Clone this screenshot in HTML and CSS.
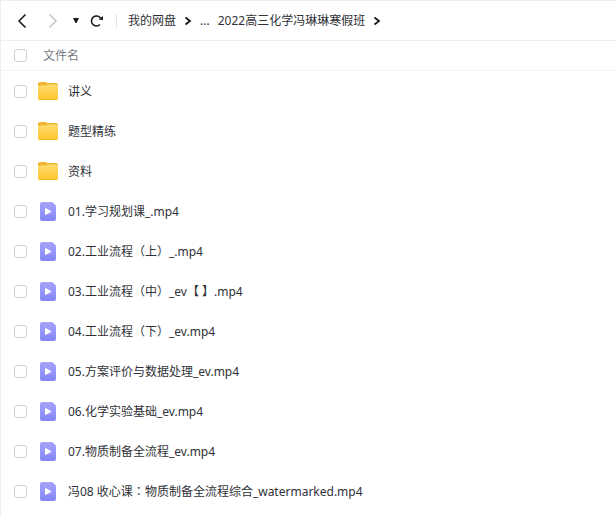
FILE: index.html
```html
<!DOCTYPE html>
<html lang="zh-CN">
<head>
<meta charset="utf-8">
<meta name="viewport" content="width=device-width, initial-scale=1">
<title>我的网盘</title>
<link rel="stylesheet" href="styles.css">
</head>
<body>
<svg class="defs" aria-hidden="true">
  <defs>
    <linearGradient id="folder-fill" x1="0" y1="0" x2="0" y2="1">
      <stop offset="0" stop-color="#ffdc70"/><stop offset="1" stop-color="#ffc72e"/>
    </linearGradient>
    <linearGradient id="video-fill" x1="0" y1="0" x2="0" y2="1">
      <stop offset="0" stop-color="#a6a5fa"/><stop offset="1" stop-color="#8585f8"/>
    </linearGradient>
    <symbol id="folder" viewBox="0 0 20 18">
      <path d="M0 2Q0 0 2 0H7Q8 0 9 1H18Q20 1 20 3V10H0Z" fill="#efb42e"/>
      <path d="M0 4.5Q0 3.5 1 3.5H8.5L10 2.5H18.5Q20 2.500 20 4V16Q20 18 18 18H2Q0 18 0 16Z" fill="url(#folder-fill)"/>
      <path d="M1 17.5H19" stroke="#f3b91f" stroke-width="1" stroke-linecap="round"/>
    </symbol>
    <symbol id="video" viewBox="0 0 16 19">
      <path d="M2 0H12L16 4V17Q16 19 14 19H2Q0 19 0 17V2Q0 0 2 0Z" fill="url(#video-fill)"/>
      <path d="M12 0L16 4H13Q12 4 12 3Z" fill="#9897f5"/>
      <path d="M5.500 6.500V12.500L11 9.500Z" fill="#fff" stroke="#fff" stroke-width="1" stroke-linejoin="round"/>
    </symbol>
  </defs>
</svg>
<main class="drive">
  <header class="toolbar">
    <button class="tool back" type="button" aria-label="后退"><svg width="10" height="14" viewBox="0 0 10 14"><path d="M8.500 0.500L2 7L8.500 13.500"/></svg></button>
    <button class="tool forward" type="button" aria-label="前进"><svg width="10" height="14" viewBox="0 0 10 14"><path d="M1.500 0.500L8 7L1.500 13.500"/></svg></button>
    <button class="tool history" type="button" aria-label="历史"><svg width="6" height="5" viewBox="0 0 6 5"><path d="M0 0H6L3.500 5H2.500Z"/></svg></button>
    <button class="tool refresh" type="button" aria-label="刷新"><svg width="14" height="12" viewBox="0 0 14 12"><path d="M10 9.500A5 5 0 1 1 10.500 3"/><path class="tip" d="M8.500 4.500L13 1V5Z"/></svg></button>
    <nav class="crumbs" aria-label="路径">
      <a href="#">我的网盘</a>
      <svg class="sep" width="8" height="10" viewBox="0 0 8 10"><path d="M1.500 1.500L6 5L1.500 8.500"/></svg>
      <a class="more" href="#">...</a>
      <a href="#">2022高三化学冯琳琳寒假班</a>
      <svg class="sep" width="8" height="10" viewBox="0 0 8 10"><path d="M1.500 1.500L6 5L1.500 8.500"/></svg>
    </nav>
  </header>
  <table class="files">
    <colgroup><col class="col-pick"><col class="col-kind"><col></colgroup>
    <thead>
      <tr><th class="pick"><input type="checkbox" aria-label="全选"></th><th class="title" colspan="2">文件名</th></tr>
    </thead>
    <tbody>
      <tr><td class="pick"><input type="checkbox" id="f1"></td><td><svg class="folder"><use href="#folder"/></svg></td><td class="name"><label for="f1">讲义</label></td></tr>
      <tr><td class="pick"><input type="checkbox" id="f2"></td><td><svg class="folder"><use href="#folder"/></svg></td><td class="name"><label for="f2">题型精练</label></td></tr>
      <tr><td class="pick"><input type="checkbox" id="f3"></td><td><svg class="folder"><use href="#folder"/></svg></td><td class="name"><label for="f3">资料</label></td></tr>
      <tr><td class="pick"><input type="checkbox" id="f4"></td><td><svg class="video"><use href="#video"/></svg></td><td class="name"><label for="f4">01.学习规划课_.mp4</label></td></tr>
      <tr><td class="pick"><input type="checkbox" id="f5"></td><td><svg class="video"><use href="#video"/></svg></td><td class="name"><label for="f5">02.工业流程<span class="centred" lang="zh-TW">（上）</span>_.mp4</label></td></tr>
      <tr><td class="pick"><input type="checkbox" id="f6"></td><td><svg class="video"><use href="#video"/></svg></td><td class="name"><label for="f6">03.工业流程<span class="centred" lang="zh-TW">（中）</span>_ev【 】.mp4</label></td></tr>
      <tr><td class="pick"><input type="checkbox" id="f7"></td><td><svg class="video"><use href="#video"/></svg></td><td class="name"><label for="f7">04.工业流程<span class="centred" lang="zh-TW">（下）</span>_ev.mp4</label></td></tr>
      <tr><td class="pick"><input type="checkbox" id="f8"></td><td><svg class="video"><use href="#video"/></svg></td><td class="name"><label for="f8">05.方案评价与数据处理_ev.mp4</label></td></tr>
      <tr><td class="pick"><input type="checkbox" id="f9"></td><td><svg class="video"><use href="#video"/></svg></td><td class="name"><label for="f9">06.化学实验基础_ev.mp4</label></td></tr>
      <tr><td class="pick"><input type="checkbox" id="f10"></td><td><svg class="video"><use href="#video"/></svg></td><td class="name"><label for="f10">07.物质制备全流程_ev.mp4</label></td></tr>
      <tr><td class="pick"><input type="checkbox" id="f11"></td><td><svg class="video"><use href="#video"/></svg></td><td class="name"><label for="f11">冯08 收心课<span class="centred" lang="zh-TW">：</span>物质制备全流程综合_watermarked.mp4</label></td></tr>
    </tbody>
  </table>
</main>
</body>
</html>
```
FILE: styles.css
```css
* { box-sizing: border-box; }

body {
  margin: 0;
  background: #fff;
  color: #303238;
  font: 12px/18px "Noto Sans", "Noto Sans CJK SC", sans-serif;
}

.defs { position: absolute; width: 0; height: 0; }

.drive {
  min-height: 100vh;
  border-left: 1px solid #eee;
}

.toolbar {
  display: flex;
  align-items: center;
  height: 41px;
  padding-left: 16px;
  border-top: 1px solid #eee;
  border-bottom: 1px solid #eee;
}

.tool {
  display: flex;
  padding: 0;
  border: 0;
  background: none;
  color: #17181c;
}

.tool svg, .sep {
  display: block;
  fill: none;
  stroke: currentColor;
  stroke-width: 1.5;
}

.sep { color: #17181c; stroke-width: 1.8; }

.forward { margin-left: 21px; color: #c4c6cc; }
.history { margin-left: 15px; }
.history svg, .refresh .tip { fill: currentColor; stroke: none; }
.refresh { margin-left: 11px; }

.crumbs {
  display: flex;
  align-items: center;
  gap: 8px;
  margin-left: 12px;
  padding-left: 12px;
  background: linear-gradient(#e4e4e6, #e4e4e6) left center / 1px 14px no-repeat;
  white-space: nowrap;
}

.crumbs a { color: inherit; text-decoration: none; }

.files {
  width: 100%;
  border-collapse: separate;
  border-spacing: 0;
  table-layout: fixed;
}

.col-pick { width: 37px; }
.col-kind { width: 30px; }

th, td {
  height: 40px;
  padding: 0;
  text-align: left;
  vertical-align: middle;
  white-space: nowrap;
}

th {
  height: 30px;
  border-bottom: 1px solid #f4f4f4;
  color: #777a82;
  font-weight: 400;
}

.pick { padding-left: 13px; }
.title { padding-left: 5px; }
.name { padding-top: 2px; }

input {
  display: block;
  width: 13px;
  height: 13px;
  margin: 0;
  appearance: none;
  border: 1px solid #d0d1d5;
  border-radius: 3px;
  background: #fff;
}

input:checked { border-color: #8585f8; background: #8585f8; }

.folder { display: block; width: 20px; height: 18px; }
.video { display: block; width: 16px; height: 19px; margin-left: 2px; }

/* Full-width punctuation centred in its cell */
.centred {
  font-family: "Noto Sans CJK TC", sans-serif;
  line-height: 1;
}
```
